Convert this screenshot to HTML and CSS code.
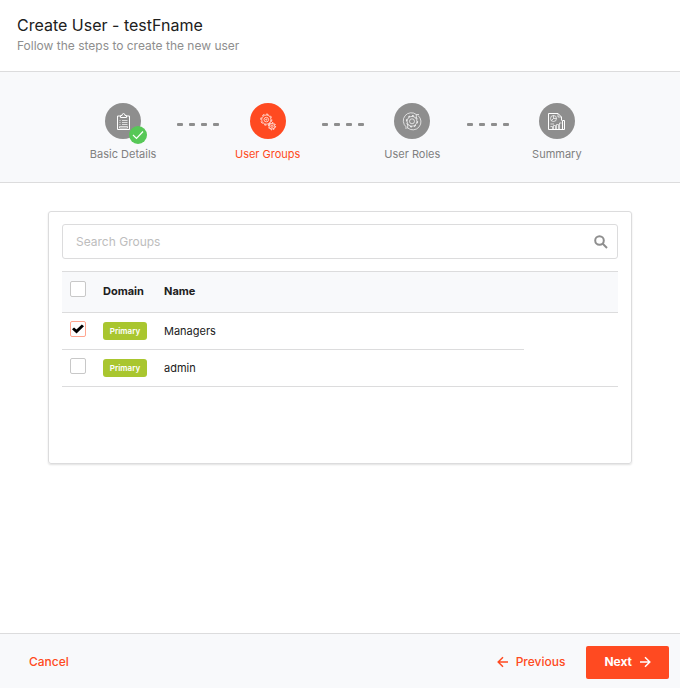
FILE: index.html
```html
<!DOCTYPE html>
<html lang="en">
<head>
<meta charset="utf-8">
<meta name="viewport" content="width=device-width, initial-scale=1">
<title>Create User</title>
<link rel="stylesheet" href="styles.css">
</head>
<body>
<div class="wizard">
  <header class="wizard-header">
    <h1>Create User - testFname</h1>
    <p>Follow the steps to create the new user</p>
  </header>

  <ol class="steps">
    <li class="step">
      <span class="step-icon">
        <svg viewBox="0 0 36 36" aria-hidden="true">
          <path class="bold" d="M15.500 13H12.500V26.500H24.500V13H21.500M15.500 14.500V12.500H17Q17 10.500 18.500 10.500T20 12.500H21.500V14.500Z"/>
          <path d="M14.500 17.500h1M17 17.500h5.500M14.500 19.500h1M17 19.500h5.500M14.500 21.500h1M17 21.500h5.500M14.500 23.500h8v1.500h-8z"/>
        </svg>
        <span class="done">
          <svg viewBox="0 0 18 18" aria-hidden="true"><path d="M4 9l3.500 3.500L14 5.500"/></svg>
        </span>
      </span>
      <span>Basic Details</span>
    </li>
    <li class="connector" aria-hidden="true"><i></i><i></i><i></i><i></i></li>
    <li class="step active" aria-current="step">
      <span class="step-icon">
        <svg viewBox="0 0 36 36" aria-hidden="true">
          <circle cx="16.300" cy="16.600" r="4.600"/>
          <circle class="teeth" cx="16.300" cy="16.600" r="5.500" pathLength="32"/>
          <circle cx="16.300" cy="16.600" r="2.300"/>
          <circle cx="16.300" cy="16.600" r="0.600"/>
          <circle cx="22" cy="23.200" r="2.800"/>
          <circle class="teeth" cx="22" cy="23.200" r="3.600" pathLength="32"/>
          <circle cx="22" cy="23.200" r="1.200"/>
        </svg>
      </span>
      <span>User Groups</span>
    </li>
    <li class="connector" aria-hidden="true"><i></i><i></i><i></i><i></i></li>
    <li class="step">
      <span class="step-icon">
        <svg viewBox="0 0 36 36" aria-hidden="true">
          <path d="M12.300 24A8 8 0 0 1 22.300 11.500M24 12.500A8 8 0 0 1 13.700 25M13.700 21.500V25H11M22.300 15V11.500H25"/>
          <circle cx="18" cy="18.300" r="4.900"/>
          <circle class="teeth" cx="18" cy="18.300" r="5.600" pathLength="32"/>
          <circle cx="18" cy="18.300" r="2.500"/>
        </svg>
      </span>
      <span>User Roles</span>
    </li>
    <li class="connector" aria-hidden="true"><i></i><i></i><i></i><i></i></li>
    <li class="step">
      <span class="step-icon">
        <svg viewBox="0 0 36 36" aria-hidden="true">
          <path class="bold" d="M22.500 17.500V14L19 10.500H9.500V26.500H25.500V17.500H23.500V26.500"/>
          <path d="M19 10.500V14H22.500M20.500 26.500V20H22.500M17.500 26.500V21.500H19.500V26.500M14.500 26.500V22.500H16.500V26.500M11.500 23.500H13.500V26.500M11.500 21H15"/>
          <circle cx="14.500" cy="15.500" r="3"/>
          <path d="M14.500 12.500V15.500H17.500M14.500 15.500L12.500 17.500"/>
        </svg>
      </span>
      <span>Summary</span>
    </li>
  </ol>

  <main class="content">
    <section class="panel">
      <div class="search">
        <input type="search" placeholder="Search Groups" aria-label="Search Groups">
        <svg viewBox="0 0 14 14" aria-hidden="true"><circle cx="5.500" cy="5.500" r="4.300"/><path d="M8.500 8.500L13 13"/></svg>
      </div>
      <table class="groups">
        <thead>
          <tr>
            <th class="col-check"><input type="checkbox" aria-label="Select all groups"></th>
            <th class="col-domain" scope="col">Domain</th>
            <th scope="col">Name</th>
            <th class="col-end"></th>
          </tr>
        </thead>
        <tbody>
          <tr>
            <td><input type="checkbox" aria-label="Managers" checked></td>
            <td><span class="tag">Primary</span></td>
            <td>Managers</td>
            <td></td>
          </tr>
          <tr>
            <td><input type="checkbox" aria-label="admin"></td>
            <td><span class="tag">Primary</span></td>
            <td>admin</td>
            <td></td>
          </tr>
        </tbody>
      </table>
    </section>
  </main>

  <footer class="wizard-footer">
    <button type="button" class="btn">Cancel</button>
    <div class="actions">
      <button type="button" class="btn">
        <svg viewBox="0 0 12 12" aria-hidden="true"><path d="M11 6H1.500M6 1.200L1.200 6L6 10.800"/></svg>
        Previous
      </button>
      <button type="button" class="btn primary">
        Next
        <svg viewBox="0 0 12 12" aria-hidden="true"><path d="M1 6H10.500M6 1.200L10.800 6L6 10.800"/></svg>
      </button>
    </div>
  </footer>
</div>
</body>
</html>
```

FILE: styles.css
```css
:root {
  --accent: #ff4a21;
  --grey: #8e8e8e;
  --line: #dcdcdd;
  --tint: #f8f9fb;
  --ink: #202020;
}

* {
  box-sizing: border-box;
}

body {
  margin: 0;
  background: #fff;
  color: var(--ink);
  font-family: Inter, "Liberation Sans", sans-serif;
  font-size: 11px;
}

svg {
  fill: none;
  stroke: currentColor;
}

.wizard {
  display: flex;
  flex-direction: column;
  min-height: 100vh;
}

.wizard-header {
  padding: 14px 17px 15px;
  border-bottom: 1px solid var(--line);
}

.wizard-header h1 {
  margin: 0;
  font-size: 16px;
  font-weight: 400;
  line-height: 22px;
}

.wizard-header p {
  margin: 0;
  color: var(--grey);
  font-size: 12px;
  line-height: 20px;
}

.steps {
  display: grid;
  grid-template-columns: repeat(7, minmax(0, 1fr));
  margin: 0;
  padding: 31px calc(50% - 253px) 20px;
  list-style: none;
  background: var(--tint);
  border-bottom: 1px solid var(--line);
}

.step {
  display: flex;
  flex-direction: column;
  align-items: center;
  gap: 7px;
  color: #808080;
  line-height: 16px;
  white-space: nowrap;
}

.step.active {
  color: var(--accent);
}

.step-icon {
  position: relative;
  width: 36px;
  height: 36px;
  border-radius: 50%;
  background: var(--grey);
  color: #fff;
}

.active .step-icon {
  background: var(--accent);
}

.step-icon svg {
  display: block;
  width: 100%;
  height: 100%;
  stroke-width: 0.7;
}

.step-icon .bold {
  stroke-width: 1;
}

.step-icon .teeth {
  stroke-width: 1;
  stroke-dasharray: 2 2;
}

.step-icon .done {
  position: absolute;
  right: -6px;
  bottom: -5px;
  width: 18px;
  height: 18px;
  border-radius: 50%;
  background: #57c857;
}

.done svg {
  stroke-width: 1.2;
}

.connector {
  display: flex;
  justify-content: center;
  gap: 6px;
  padding: 20px 0 0 6px;
}

.connector i {
  width: 6px;
  height: 3px;
  border-radius: 1px;
  background: var(--grey);
}

.content {
  flex: 1;
  padding: 28px 48px;
}

.panel {
  min-height: 253px;
  padding: 12px 13px;
  border: 1px solid var(--line);
  border-radius: 3px;
  box-shadow: 0 1px 2px rgba(0, 0, 0, 0.12);
}

.search {
  display: flex;
  align-items: center;
  height: 35px;
  margin-bottom: 12px;
  padding: 0 9px 0 13px;
  border: 1px solid var(--line);
  border-radius: 3px;
}

.search input {
  flex: 1;
  min-width: 0;
  padding: 0;
  border: 0;
  outline: 0;
  background: none;
  color: inherit;
  font: 12px Inter, "Liberation Sans", sans-serif;
}

.search input::placeholder {
  color: #bdbdbd;
}

.search svg {
  width: 14px;
  height: 14px;
  color: var(--grey);
  stroke-width: 2;
}

.groups {
  width: 100%;
  border-collapse: separate;
  border-spacing: 0;
  table-layout: fixed;
}

.groups th,
.groups td {
  padding: 0 8px;
  border-bottom: 1px solid var(--line);
  text-align: left;
  vertical-align: middle;
}

.groups th {
  height: 42px;
  padding-bottom: 2px;
  border-top: 1px solid var(--line);
  background: var(--tint);
  font-weight: 700;
}

.groups td {
  height: 37px;
}

.groups tbody tr:first-child td:last-child {
  border-bottom: 0;
}

.groups .col-check {
  width: 33px;
}

.groups .col-domain {
  width: 61px;
}

.groups .col-end {
  width: 94px;
}

.groups input {
  display: grid;
  place-items: center;
  appearance: none;
  width: 16px;
  height: 16px;
  margin: 0 0 4px;
  border: 1px solid #c8c8c8;
  border-radius: 2px;
  background: #fff;
}

.groups input:checked {
  border-color: #ffa58f;
}

.groups input:checked::before {
  content: "";
  width: 12px;
  height: 10px;
  background: #000;
  clip-path: polygon(0 52%, 17% 34%, 37% 54%, 82% 4%, 100% 22%, 38% 94%);
}

.tag {
  display: block;
  width: 44px;
  border-radius: 3px;
  background: #a9c62f;
  color: #fff;
  font-size: 8px;
  font-weight: 600;
  line-height: 18px;
  text-align: center;
}

.wizard-footer {
  display: flex;
  align-items: center;
  justify-content: space-between;
  padding: 12px 11px 9px;
  border-top: 1px solid var(--line);
  background: var(--tint);
}

.actions {
  display: flex;
  gap: 3px;
}

.btn {
  display: flex;
  align-items: center;
  gap: 7px;
  height: 33px;
  padding: 0 18px 2px;
  border: 0;
  border-radius: 2px;
  background: none;
  color: var(--accent);
  font: 500 12px Inter, "Liberation Sans", sans-serif;
  cursor: pointer;
}

.btn svg {
  width: 12px;
  height: 12px;
  stroke-width: 1.5;
}

.btn.primary {
  background: var(--accent);
  color: #fff;
  font-weight: 700;
}
```
